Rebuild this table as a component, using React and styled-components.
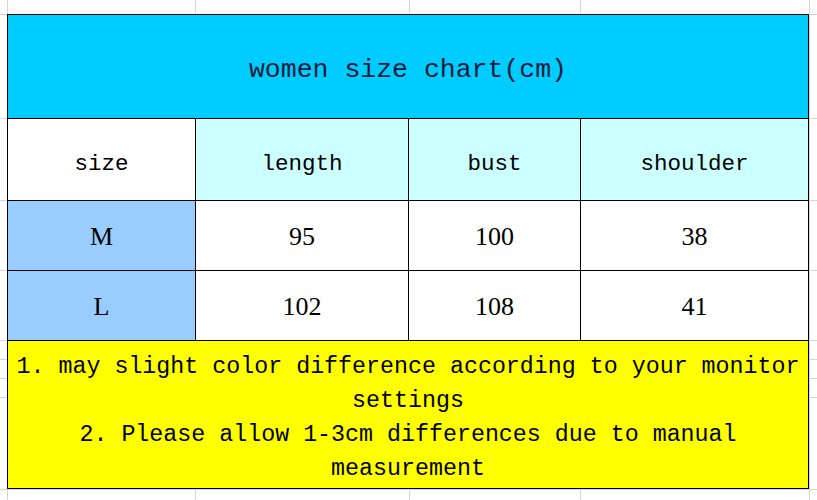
import React from 'react';
import styled, { createGlobalStyle } from 'styled-components';

const GlobalStyle = createGlobalStyle`
    html, body {
        margin: 0;
        padding: 0;
        background: #fff;
    }
`;

const grid = '#d6d6d6';
const hLine = y => `linear-gradient(${grid}, ${grid}) 0 ${y}px / 100% 1px no-repeat`;
const vLine = x => `linear-gradient(${grid}, ${grid}) ${x}px 0 / 1px 100% no-repeat`;

const Sheet = styled.div`
    width: 817px;
    height: 500px;
    box-sizing: border-box;
    padding: 14px 0 0 7px;
    background: ${[14, 118, 200, 270, 340, 359, 378, 397, 489].map(hLine).join(', ')},
        ${[7, 195, 409, 580, 809].map(vLine).join(', ')}, #fff;
`;

const Chart = styled.div`
    display: grid;
    grid-template-columns: 187px 212px 171px 227px;
    grid-template-rows: 103px 81px 69px 69px 147px;
    gap: 1px;
    padding: 1px;
    width: max-content;
    background: #000;
`;

const Cell = styled.div`
    display: flex;
    align-items: center;
    justify-content: center;
    text-align: center;
    background: ${ props => props.bg || '#fff' };
    color: #000;
    font-family: ${ props => props.serif ? '"Liberation Serif", serif' : '"Liberation Mono", monospace' };
    font-size: ${ props => props.size || 22.5 }px;
    padding-top: ${ props => props.nudge || 0 }px;
    box-sizing: border-box;
`;

const Title = styled(Cell)`
    grid-column: 1 / -1;
    color: #0b1c3a;
`;

const Notes = styled(Cell)`
    grid-column: 1 / -1;
    line-height: 34px;
    padding: 7px 4px 0;
`;

const columns = ['length', 'bust', 'shoulder'];

const rows = [
    ['M', '95', '100', '38'],
    ['L', '102', '108', '41'],
];

export default function App() {
    return (
        <>
            <GlobalStyle />
            <Sheet>
                <Chart>
                    <Title bg="#00ccff" size={26.5} nudge={6}>women size chart(cm)</Title>

                    <Cell nudge={8}>size</Cell>
                    { columns.map(col => (
                        <Cell key={ col } bg="#ccffff" nudge={8}>{ col }</Cell>
                    )) }

                    { rows.map(row => row.map((val, i) => (
                        <Cell
                            key={ `${row[0]}-${i}` }
                            bg={ i === 0 ? '#99ccff' : '#fff' }
                            serif
                            size={ 26 }
                            nudge={ 3 }
                        >
                            { val }
                        </Cell>
                    ))) }

                    <Notes bg="#ffff00" size={23.3}>
                        1. may slight color difference according to your monitor settings
                        <br />
                        2. Please allow 1-3cm differences due to manual measurement
                    </Notes>
                </Chart>
            </Sheet>
        </>
    );
}
